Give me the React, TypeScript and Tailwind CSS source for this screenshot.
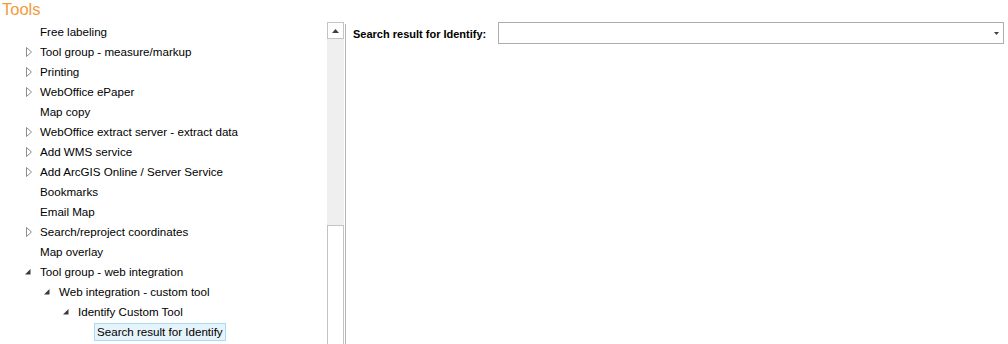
const font = "font-['Liberation_Sans',Arial,sans-serif]";

type Item = { label: string; level: number; state: "none" | "collapsed" | "expanded"; selected?: boolean };

const items: Item[] = [
  { label: "Free labeling", level: 0, state: "none" },
  { label: "Tool group - measure/markup", level: 0, state: "collapsed" },
  { label: "Printing", level: 0, state: "collapsed" },
  { label: "WebOffice ePaper", level: 0, state: "collapsed" },
  { label: "Map copy", level: 0, state: "none" },
  { label: "WebOffice extract server - extract data", level: 0, state: "collapsed" },
  { label: "Add WMS service", level: 0, state: "collapsed" },
  { label: "Add ArcGIS Online / Server Service", level: 0, state: "collapsed" },
  { label: "Bookmarks", level: 0, state: "none" },
  { label: "Email Map", level: 0, state: "none" },
  { label: "Search/reproject coordinates", level: 0, state: "collapsed" },
  { label: "Map overlay", level: 0, state: "none" },
  { label: "Tool group - web integration", level: 0, state: "expanded" },
  { label: "Web integration - custom tool", level: 1, state: "expanded" },
  { label: "Identify Custom Tool", level: 2, state: "expanded" },
  { label: "Search result for Identify", level: 3, state: "none", selected: true },
];

const levelPad = ["pl-[21px]", "pl-[40px]", "pl-[59px]", "pl-[78px]"];

const Toggle = ({ state }: { state: Item["state"] }) => {
  if (state === "collapsed") {
    return (
      <div className="w-[19px] pl-[5px] flex items-center">
        <svg width="7" height="10" viewBox="0 0 7 10">
          <path d="M0.5 0.5 L5.5 5 L0.5 9.5 Z" fill="none" stroke="#8c8c8c" strokeWidth="1" />
        </svg>
      </div>
    );
  }
  if (state === "expanded") {
    return (
      <div className="w-[19px] pl-[4px] flex items-center">
        <svg width="6" height="6" viewBox="0 0 6 6">
          <path d="M5.5 0 L5.5 5.5 L0 5.5 Z" fill="#3a3a3a" />
        </svg>
      </div>
    );
  }
  return <div className="w-[19px]" />;
};

const TreeRow = ({ item }: { item: Item }) => (
  <div className={`flex items-center h-5 pt-px ${levelPad[item.level]}`}>
    <Toggle state={item.state} />
    {item.selected ? (
      <span className="-ml-[3px] px-[2px] h-[18px] leading-[16px] bg-[#e5f3fb] border border-[#a9dbf6] text-black whitespace-nowrap">
        {item.label}
      </span>
    ) : (
      <span className="text-black whitespace-nowrap">{item.label}</span>
    )}
  </div>
);

export default function App() {
  return (
    <div className={`${font} w-[1008px] h-[344px] overflow-hidden bg-white flex flex-col text-[11.6px]`}>
      <div className="h-[21px] pl-[2px] text-[16.5px] leading-[18px] text-[#f39a3c]">Tools</div>
      <div className="flex flex-1 min-h-0">
        <div className="w-[327px] overflow-hidden">
          {items.map((it, i) => (
            <TreeRow key={i} item={it} />
          ))}
        </div>
        <div className="w-[17px] mt-px bg-[#efefef] flex flex-col">
          <div className="h-[17px] border border-[#c4c4c4] bg-white flex items-center justify-center">
            <svg width="7" height="4" viewBox="0 0 7 4">
              <path d="M3.5 0 L7 4 L0 4 Z" fill="#404040" />
            </svg>
          </div>
          <div className="h-[186px]" />
          <div className="flex-1 border border-[#c4c4c4] border-b-0 bg-white" />
        </div>
        <div className="w-px ml-px mt-[3px] bg-[#b4b4b4]" />
        <div className="flex-1 pl-[7px] pr-[4px] mt-px">
          <div className="flex items-center h-[22px]">
            <span className="font-bold text-[11px] text-black whitespace-nowrap w-[145px] pt-[3px]">Search result for Identify:</span>
            <div className="flex-1 h-[22px] border border-[#abadb3] flex items-center justify-end pr-[4px]">
              <svg width="5" height="3" viewBox="0 0 5 3">
                <path d="M0 0 L5 0 L2.5 3 Z" fill="#404040" />
              </svg>
            </div>
          </div>
        </div>
      </div>
    </div>
  );
}
